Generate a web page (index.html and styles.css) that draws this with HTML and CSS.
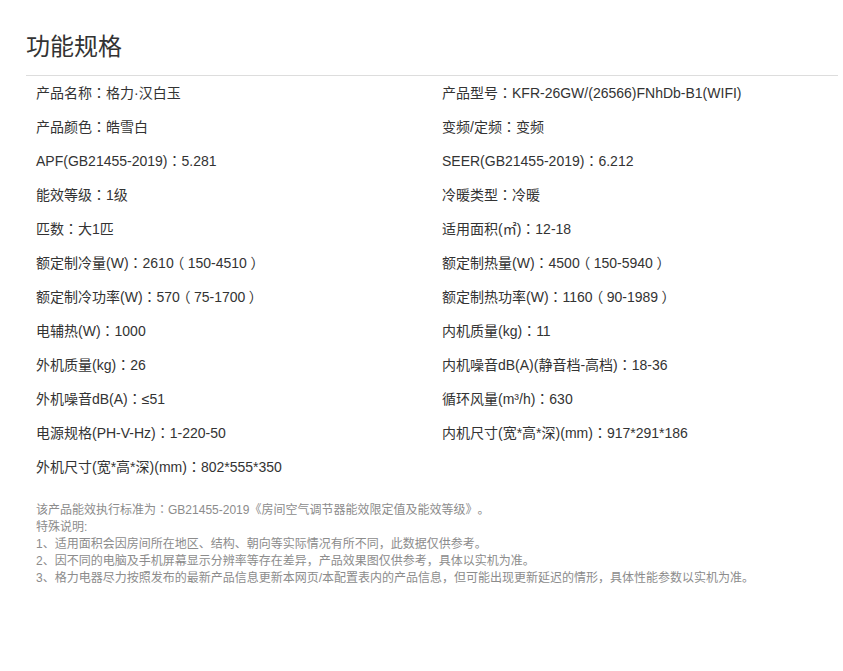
FILE: index.html
```html
<!DOCTYPE html>
<html lang="zh-CN">
<head>
<meta charset="utf-8">
<title>功能规格</title>
<link rel="stylesheet" href="styles.css">
</head>
<body>
<div class="spec">
  <h2 class="spec-title">功能规格</h2>
  <div class="spec-grid">
    <div class="cell">产品名称<span class="p" lang="zh-TW">：</span>格力·汉白玉</div>
    <div class="cell">产品型号<span class="p" lang="zh-TW">：</span>KFR-26GW/(26566)FNhDb-B1(WIFI)</div>
    <div class="cell">产品颜色<span class="p" lang="zh-TW">：</span>皓雪白</div>
    <div class="cell">变频/定频<span class="p" lang="zh-TW">：</span>变频</div>
    <div class="cell">APF(GB21455-2019)<span class="p" lang="zh-TW">：</span>5.281</div>
    <div class="cell">SEER(GB21455-2019)<span class="p" lang="zh-TW">：</span>6.212</div>
    <div class="cell">能效等级<span class="p" lang="zh-TW">：</span>1级</div>
    <div class="cell">冷暖类型<span class="p" lang="zh-TW">：</span>冷暖</div>
    <div class="cell">匹数<span class="p" lang="zh-TW">：</span>大1匹</div>
    <div class="cell">适用面积(㎡)<span class="p" lang="zh-TW">：</span>12-18</div>
    <div class="cell">额定制冷量(W)<span class="p" lang="zh-TW">：</span>2610<span class="p" lang="zh-TW">（</span>150-4510<span class="p" lang="zh-TW">）</span></div>
    <div class="cell">额定制热量(W)<span class="p" lang="zh-TW">：</span>4500<span class="p" lang="zh-TW">（</span>150-5940<span class="p" lang="zh-TW">）</span></div>
    <div class="cell">额定制冷功率(W)<span class="p" lang="zh-TW">：</span>570<span class="p" lang="zh-TW">（</span>75-1700<span class="p" lang="zh-TW">）</span></div>
    <div class="cell">额定制热功率(W)<span class="p" lang="zh-TW">：</span>1160<span class="p" lang="zh-TW">（</span>90-1989<span class="p" lang="zh-TW">）</span></div>
    <div class="cell">电辅热(W)<span class="p" lang="zh-TW">：</span>1000</div>
    <div class="cell">内机质量(kg)<span class="p" lang="zh-TW">：</span>11</div>
    <div class="cell">外机质量(kg)<span class="p" lang="zh-TW">：</span>26</div>
    <div class="cell">内机噪音dB(A)(静音档-高档)<span class="p" lang="zh-TW">：</span>18-36</div>
    <div class="cell">外机噪音dB(A)<span class="p" lang="zh-TW">：</span>≤51</div>
    <div class="cell">循环风量(m³/h)<span class="p" lang="zh-TW">：</span>630</div>
    <div class="cell">电源规格(PH-V-Hz)<span class="p" lang="zh-TW">：</span>1-220-50</div>
    <div class="cell">内机尺寸(宽*高*深)(mm)<span class="p" lang="zh-TW">：</span>917*291*186</div>
    <div class="cell">外机尺寸(宽*高*深)(mm)<span class="p" lang="zh-TW">：</span>802*555*350</div>
  </div>
  <div class="notes">
    <p>该产品能效执行标准为<span class="p" lang="zh-TW">：</span>GB21455-2019《房间空气调节器能效限定值及能效等级》。</p>
    <p>特殊说明:</p>
    <p>1、适用面积会因房间所在地区、结构、朝向等实际情况有所不同，此数据仅供参考。</p>
    <p>2、因不同的电脑及手机屏幕显示分辨率等存在差异，产品效果图仅供参考，具体以实机为准。</p>
    <p>3、格力电器尽力按照发布的最新产品信息更新本网页/本配置表内的产品信息，但可能出现更新延迟的情形，具体性能参数以实机为准。</p>
  </div>
</div>
</body>
</html>
```
FILE: styles.css
```css
html, body {
  margin: 0;
  padding: 0;
  background: #fff;
}
body {
  font-family: "Liberation Sans", Arial, "Noto Sans CJK SC", sans-serif;
  color: #333;
  text-spacing-trim: space-all;
}
.spec {
  width: 812px;
  margin: 0 0 0 26px;
  padding-top: 29px;
}
.spec-title {
  margin: 0;
  font-size: 24px;
  font-weight: normal;
  line-height: 36px;
  color: #333;
  padding-bottom: 10px;
  border-bottom: 1px solid #ddd;
}
.spec-grid {
  display: grid;
  grid-template-columns: 406px 406px;
}
.cell {
  padding-left: 10px;
  font-size: 14px;
  line-height: 34px;
  height: 34px;
  white-space: nowrap;
}
.p {
  font-family: "Noto Sans CJK TC", "Noto Sans CJK SC", sans-serif;
  font-feature-settings: "halt" 1;
  line-height: 1;
  display: inline-block;
  width: 1em;
  text-align: center;
}
.notes {
  margin-top: 18px;
  padding-left: 10px;
  font-size: 12px;
  line-height: 17px;
  color: #8c8c8c;
}
.notes p {
  margin: 0;
}
```
